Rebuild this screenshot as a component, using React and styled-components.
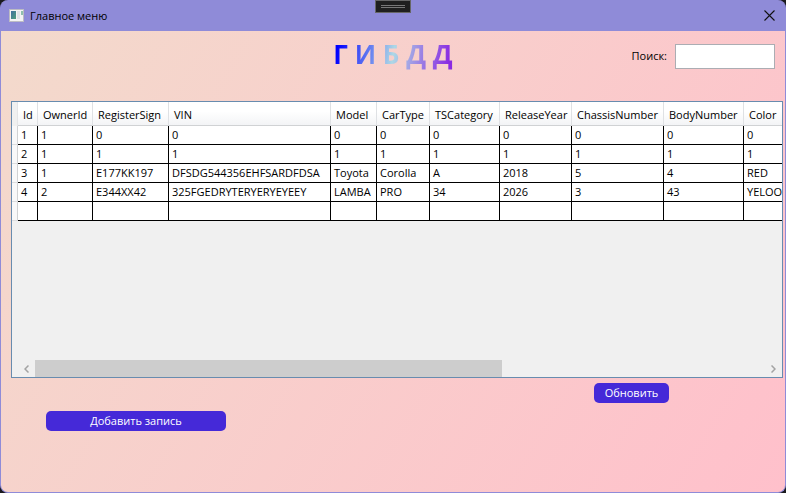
import React, { useState } from "react";
import styled, { createGlobalStyle } from "styled-components";

const GlobalStyle = createGlobalStyle`
  *, *::before, *::after { box-sizing: border-box; }
  body {
    margin: 0;
    background: #1a1a1e;
    font-family: "Open Sans", "Noto Sans", sans-serif;
    font-size: 11px;
    line-height: 18px;
    color: #000;
  }
`;

const Window = styled.div`
  display: flex;
  flex-direction: column;
  min-height: 100vh;
  border: 1px solid #8f8bd8;
  border-top: 0;
  border-radius: 8px;
  overflow: hidden;
  background: #8f8bd8;
`;

const TitleBar = styled.header`
  position: relative;
  display: flex;
  align-items: center;
  gap: 6px;
  height: 31px;
  padding-left: 8px;
`;

const WindowTitle = styled.span`
  flex: 1;
`;

const CloseButton = styled.button`
  display: flex;
  align-items: center;
  justify-content: center;
  width: 31px;
  height: 31px;
  padding: 0;
  border: 0;
  background: transparent;
`;

const DebugHandle = styled.div`
  position: absolute;
  top: 0;
  left: 50%;
  width: 36px;
  height: 13px;
  margin-left: -18px;
  padding: 4px 5px;
  border: 1px solid #666;
  background: #1f1f1f;

  &::before {
    content: "";
    display: block;
    height: 3px;
    border: solid #777;
    border-width: 1px 0;
  }
`;

const Content = styled.main`
  flex: 1;
  display: flex;
  flex-direction: column;
  background: linear-gradient(121deg, #f3dacc, #ffc0cb);
`;

const Heading = styled.div`
  display: grid;
  grid-template-columns: 1fr auto 1fr;
  align-items: center;
  height: 50px;
  padding: 0 10px;
`;

const Logo = styled.h1`
  grid-column: 2;
  margin: 0;
  padding-bottom: 4px;
  font-size: 26px;
  line-height: 34px;
  font-weight: 700;
  color: transparent;
  background: linear-gradient(100deg, #00f 5%, #add8e6 50%, #8a2be2 95%);
  background-clip: text;
  -webkit-background-clip: text;
`;

const Search = styled.label`
  display: flex;
  align-items: center;
  justify-content: flex-end;
  gap: 8px;
`;

const SearchInput = styled.input`
  width: 100px;
  height: 25px;
  padding: 0 4px;
  border: 1px solid #abadb3;
  background: #fff;
  font: inherit;
`;

const GridPanel = styled.section`
  display: flex;
  flex-direction: column;
  height: 277px;
  margin: 20px 2px 0 10px;
  border: 1px solid #688caf;
  background: #f0f0f0;
`;

const Viewport = styled.div`
  flex: 1;
  overflow: hidden;
`;

const Table = styled.table`
  width: 800px;
  table-layout: fixed;
  border-collapse: separate;
  border-spacing: 0;
`;

const Column = styled.col`
  width: ${(p) => p.$width}px;
`;

const HeadCell = styled.th`
  height: 24px;
  padding: 2px 0 0 5px;
  border-right: 1px solid #dfe1e4;
  border-bottom: 1px solid #d0d2d4;
  background: linear-gradient(#fff 40%, #f3f4f6);
  font-weight: 400;
  text-align: left;
  white-space: nowrap;
`;

const Corner = styled.td`
  border-right: 1px solid #e4e5e7;
  background: #f0f0f0;
`;

const RowHeader = styled.td`
  padding: 0;
  border-right: 1px solid #d0d2d4;
  border-bottom: 1px solid #dcdddf;
  background: #f8f8f9;
`;

const Cell = styled.td`
  height: 19px;
  padding: 0 0 0 3px;
  border-right: 1px solid #000;
  border-bottom: 1px solid #000;
  background: #fff;
  white-space: nowrap;
`;

const ScrollBar = styled.div`
  display: flex;
  height: 17px;
  margin-left: 6px;
`;

const ScrollButton = styled.button`
  display: flex;
  align-items: center;
  justify-content: center;
  width: 17px;
  padding: 0;
  border: 0;
  background: transparent;
`;

const Track = styled.div`
  flex: 1;
`;

const Thumb = styled.div`
  width: 64%;
  height: 100%;
  background: #cdcdcd;
`;

const Actions = styled.footer`
  display: flex;
  justify-content: space-between;
  align-items: flex-start;
  padding: 5px 116px 8px 45px;
`;

const ActionButton = styled.button`
  width: ${(p) => p.$width}px;
  height: 20px;
  margin-top: ${(p) => (p.$lowered ? 28 : 0)}px;
  padding: 0;
  border: 0;
  border-radius: 5px;
  background: #4529d8;
  color: #fff;
  font: inherit;
`;

const columns = [
  ["Id", 20],
  ["OwnerId", 55],
  ["RegisterSign", 76],
  ["VIN", 162],
  ["Model", 46],
  ["CarType", 53],
  ["TSCategory", 70],
  ["ReleaseYear", 72],
  ["ChassisNumber", 92],
  ["BodyNumber", 80],
  ["Color", 68],
];

const rows = [
  ["1", "1", "0", "0", "0", "0", "0", "0", "0", "0", "0"],
  ["2", "1", "1", "1", "1", "1", "1", "1", "1", "1", "1"],
  ["3", "1", "E177KK197", "DFSDG544356EHFSARDFDSA", "Toyota", "Corolla", "A", "2018", "5", "4", "RED"],
  ["4", "2", "E344XX42", "325FGEDRYTERYERYEYEEY", "LAMBA", "PRO", "34", "2026", "3", "43", "YELOO"],
  ["", "", "", "", "", "", "", "", "", "", ""],
];

const AppIcon = () => (
  <svg width="15" height="13" viewBox="0 0 15 13" aria-hidden="true">
    <defs>
      <linearGradient id="pane" x1="0" y1="0" x2="1" y2="1">
        <stop offset="0" stopColor="#3f6fa0" />
        <stop offset="1" stopColor="#4fa07c" />
      </linearGradient>
    </defs>
    <rect x="0.5" y="0.5" width="14" height="12" fill="#f4f4f4" stroke="#bcbcc4" />
    <rect x="2" y="2" width="5" height="8" fill="url(#pane)" />
    <rect x="8" y="2" width="3" height="8" fill="#dfe3e6" />
    <rect x="12" y="2" width="2" height="4" fill="#8fc0ae" />
  </svg>
);

const CloseIcon = () => (
  <svg width="11" height="11" viewBox="0 0 11 11" aria-hidden="true">
    <path d="M.5 .5l10 10M10.5 .5l-10 10" stroke="#111" strokeWidth="1.1" />
  </svg>
);

const Chevron = ({ d }) => (
  <svg width="5" height="8" viewBox="0 0 5 8" aria-hidden="true">
    <path d={d} fill="none" stroke="#a3a3a3" strokeWidth="1.5" />
  </svg>
);

export default function App() {
  const [query, setQuery] = useState("");
  return (
    <>
      <GlobalStyle />
      <Window>
        <TitleBar>
          <AppIcon />
          <WindowTitle>Главное меню</WindowTitle>
          <CloseButton type="button" aria-label="Закрыть">
            <CloseIcon />
          </CloseButton>
          <DebugHandle />
        </TitleBar>
        <Content>
          <Heading>
            <Logo>Г И Б Д Д</Logo>
            <Search>
              Поиск:
              <SearchInput value={query} onChange={(e) => setQuery(e.target.value)} />
            </Search>
          </Heading>
          <GridPanel>
            <Viewport>
              <Table>
                <colgroup>
                  <Column $width={6} />
                  {columns.map(([name, width]) => (
                    <Column key={name} $width={width} />
                  ))}
                </colgroup>
                <thead>
                  <tr>
                    <Corner />
                    {columns.map(([name]) => (
                      <HeadCell key={name} scope="col">{name}</HeadCell>
                    ))}
                  </tr>
                </thead>
                <tbody>
                  {rows.map((row, r) => (
                    <tr key={r}>
                      <RowHeader />
                      {row.map((value, c) => (
                        <Cell key={c}>{value}</Cell>
                      ))}
                    </tr>
                  ))}
                </tbody>
              </Table>
            </Viewport>
            <ScrollBar>
              <ScrollButton type="button" aria-label="Влево">
                <Chevron d="M4.5 .5L1 4l3.5 3.5" />
              </ScrollButton>
              <Track>
                <Thumb />
              </Track>
              <ScrollButton type="button" aria-label="Вправо">
                <Chevron d="M.5 .5L4 4 .5 7.5" />
              </ScrollButton>
            </ScrollBar>
          </GridPanel>
          <Actions>
            <ActionButton type="button" $width={180} $lowered>Добавить запись</ActionButton>
            <ActionButton type="button" $width={75}>Обновить</ActionButton>
          </Actions>
        </Content>
      </Window>
    </>
  );
}
